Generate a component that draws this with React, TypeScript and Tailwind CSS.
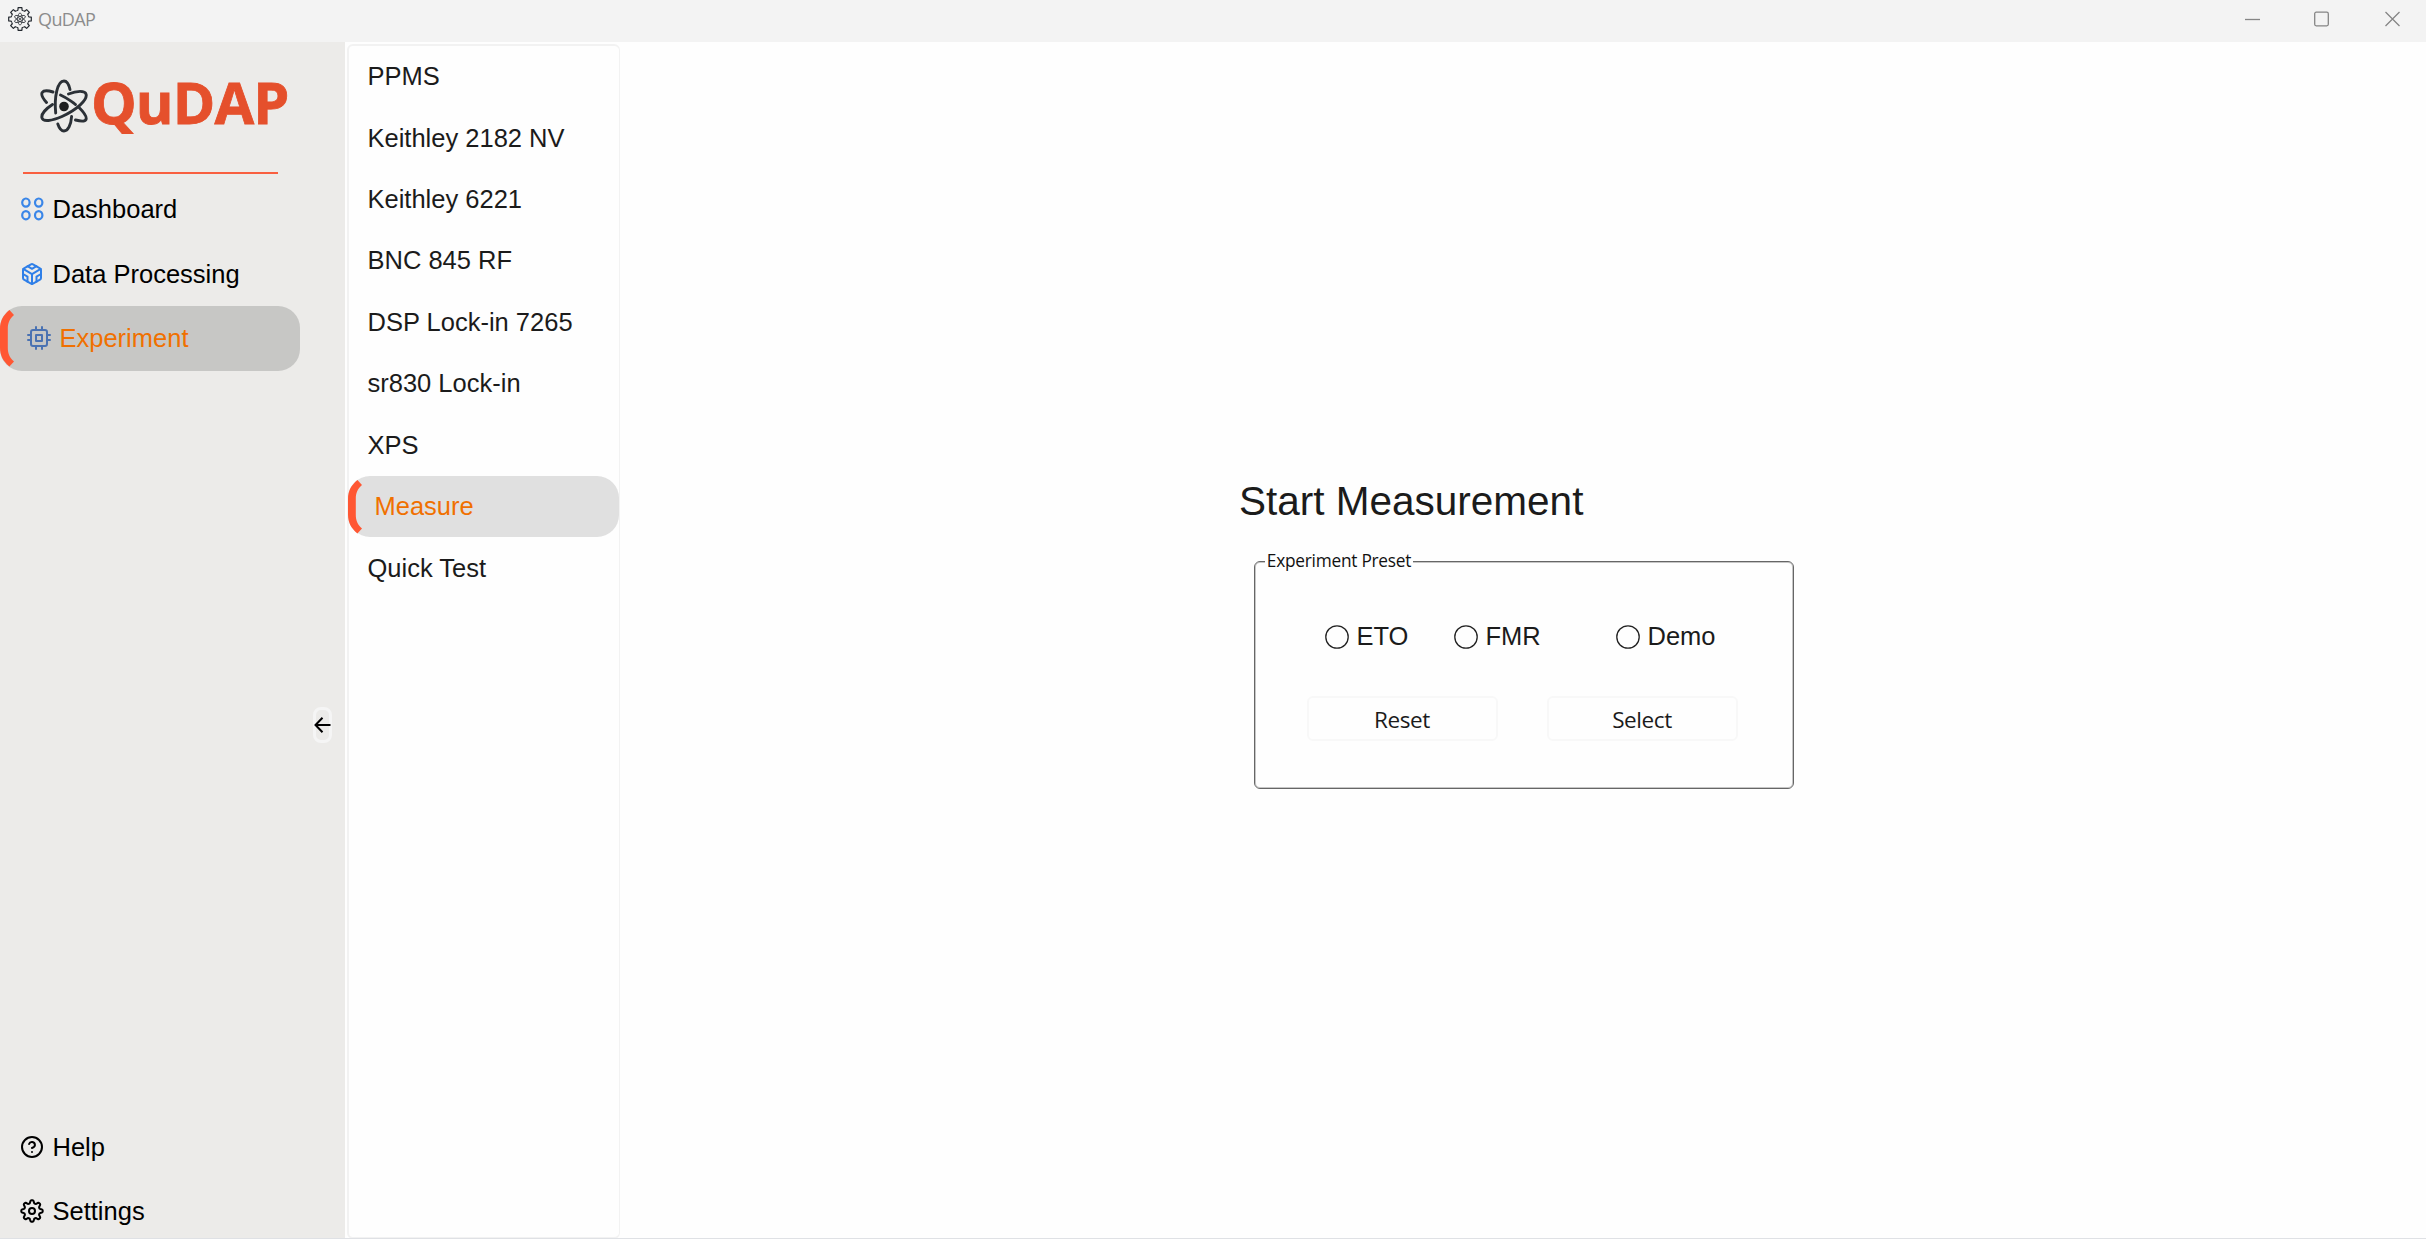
import type { ReactNode } from 'react'
import { FiCodesandbox, FiCpu, FiHelpCircle } from 'react-icons/fi'

const instruments = [
  'PPMS',
  'Keithley 2182 NV',
  'Keithley 6221',
  'BNC 845 RF',
  'DSP Lock-in 7265',
  'sr830 Lock-in',
  'XPS',
  'Measure',
  'Quick Test',
]

/** Curved accent on the left edge of a selected entry. */
function SelectionMark({ height }: { height: number }) {
  const b = height - 4
  const d = `M9.4 4C3 9.500 0 15 0 23V${height - 23}C0 ${height - 15} 3 ${b - 5.5} 9.4 ${b}L14 ${b - 5}C9.500 ${b - 9} 7.800 ${b - 13} 7.800 ${b - 19}V23C7.800 17 9.500 13 14 9Z`
  return (
    <svg className="absolute top-0 left-0" width="16" height={height} fill="#ff5733">
      <path d={d} />
    </svg>
  )
}

function AppIcon() {
  const teeth = [0, 45, 90, 135, 180, 225, 270, 315]
  return (
    <svg width="24" height="24" viewBox="0 0 24 24" fill="none" stroke="#23282f" strokeWidth="1.2">
      {teeth.map((a) => (
        <path
          key={a}
          transform={`rotate(${a} 12 12)`}
          d="M8.600 3.700L9.900 3.200L10.100 0.700H13.900L14.100 3.200L15.400 3.700"
          strokeLinejoin="round"
        />
      ))}
      <g strokeWidth="0.750">
        <ellipse cx="12" cy="12" rx="2.300" ry="6" />
        <ellipse cx="12" cy="12" rx="2.300" ry="6" transform="rotate(60 12 12)" />
        <ellipse cx="12" cy="12" rx="2.300" ry="6" transform="rotate(120 12 12)" />
      </g>
      <circle cx="12" cy="12" r="0.900" fill="#23282f" stroke="none" />
    </svg>
  )
}

function AtomLogo() {
  return (
    <svg width="48" height="54" viewBox="0 0 48 54" fill="none" stroke="#2b3036" strokeWidth="2.900" strokeLinecap="round">
      <path d="M15.700 34C14.200 19 17 2 24 2C27 2 29 6 30 10.500" />
      <path d="M17.800 45C19.300 49.500 21.300 52 24 52C28 52 31 46 31.600 37.500" />
      <path d="M28.500 15C37 11.500 45 11.500 46 15C48 21 36 31 22 37.500C12 42 3 43 2 39C1 35.500 5.500 30 12.500 25.500" />
      <path d="M20.500 16C28 19.500 35 25 35.500 25.500" />
      <path d="M39.500 29C44.500 34 47 38 46 40.500C45 42.500 41 42.500 35.500 41" />
      <path d="M6.500 23.500C2.500 19 1 15.500 2.200 13.500C3.500 11.500 8 11.500 13 13" />
      <circle cx="24" cy="27.500" r="4.800" fill="#1e1e1e" stroke="none" />
    </svg>
  )
}

function DashboardIcon() {
  return (
    <svg width="24" height="24" viewBox="0 0 24 24" fill="none" stroke="#3a86e8" strokeWidth="2.2">
      <ellipse cx="5.900" cy="5.600" rx="3.700" ry="4.100" />
      <ellipse cx="18.700" cy="5.600" rx="3.700" ry="4.100" />
      <ellipse cx="5.900" cy="18.200" rx="3.700" ry="4.100" />
      <ellipse cx="18.700" cy="18.200" rx="3.700" ry="4.100" />
    </svg>
  )
}

const gearOutline = Array.from({ length: 96 }, (_, i) => {
  const t = (i / 96) * 2 * Math.PI
  const wave = Math.cos(8 * t)
  const r = 9.3 + 1.5 * Math.tanh(1.8 * wave)
  return `${(12 + r * Math.sin(t)).toFixed(2)} ${(12 - r * Math.cos(t)).toFixed(2)}`
}).join('L')

function SettingsIcon() {
  return (
    <svg width="24" height="24" viewBox="0 0 24 24" fill="none" stroke="black" strokeWidth="2" strokeLinejoin="round">
      <path d={`M${gearOutline}Z`} />
      <circle cx="12" cy="12" r="3" />
    </svg>
  )
}

function NavItem({ icon, label, selected = false }: { icon: ReactNode; label: string; selected?: boolean }) {
  return (
    <div
      className={
        selected
          ? 'relative flex h-[64.5px] w-[300px] shrink-0 items-center rounded-[22px] bg-[#c7c7c5] pl-[27px] text-[#f07000]'
          : 'flex h-[64.5px] w-[300px] shrink-0 items-center pl-5 text-black'
      }
    >
      {selected && <SelectionMark height={64.5} />}
      <span className="flex w-[32.500px] shrink-0 items-center">{icon}</span>
      <span>{label}</span>
    </div>
  )
}

function Radio({ label, className }: { label: string; className: string }) {
  return (
    <div className={`flex items-center ${className}`}>
      <svg className="mr-2 shrink-0" width="24" height="24" viewBox="0 0 24 24" fill="none" stroke="#222222" strokeWidth="1.300">
        <circle cx="12" cy="12" r="11.200" />
      </svg>
      <span>{label}</span>
    </div>
  )
}

function PresetButton({ label }: { label: string }) {
  return (
    <button className="flex h-[45px] w-[191px] items-center justify-center rounded-md border-2 border-[#f8f8f8] pt-0.5 pr-px font-['Open_Sans',sans-serif] text-[22.500px] tracking-[-0.4px]">
      {label}
    </button>
  )
}

export default function App() {
  return (
    <div className="flex h-[1239px] w-[2426px] flex-col overflow-hidden bg-[#fefefe] font-['Liberation_Sans',Arial,sans-serif] text-[25.5px] text-[#1b1b1b]">
      <header className="flex h-[42px] shrink-0 items-center bg-[#f3f3f3] pr-[26px] pb-1 pl-2">
        <AppIcon />
        <span className="mt-px ml-1.5 font-['Open_Sans',sans-serif] text-[18px] tracking-[-0.600px] text-[#8c8c8c]">QuDAP</span>
        <svg className="ml-auto" width="155" height="16" viewBox="0 0 155 16" fill="none" stroke="#858585" strokeWidth="1.300">
          <path d="M0 8.500H15" />
          <rect x="69.700" y="1.200" width="13.600" height="13.600" rx="1.500" />
          <path d="M140.500 1L154.500 15M154.500 1L140.500 15" />
        </svg>
      </header>

      <div className="flex min-h-0 flex-1">
        <aside className="flex w-[345px] shrink-0 bg-[#ecebe9]">
          <div className="flex w-[300px] shrink-0 flex-col">
            <div className="flex h-[129.500px] shrink-0 items-start pt-[37px] pl-[40px]">
              <AtomLogo />
              <span className="mt-[-7px] ml-[3px] font-['Open_Sans',sans-serif] text-[57.500px] leading-[60px] font-bold tracking-[-0.900px] text-[#e5502c] [-webkit-text-stroke:0.8px_#e5502c]">
                QuDAP
              </span>
            </div>
            <div className="mb-[3.500px] ml-[23px] h-[2px] w-[255px] shrink-0 bg-[#f95f40]" />
            <NavItem icon={<DashboardIcon />} label="Dashboard" />
            <NavItem icon={<FiCodesandbox size={24} color="#2f7fe8" />} label="Data Processing" />
            <NavItem icon={<FiCpu size={24} color="#4a72b2" />} label="Experiment" selected />
            <div className="flex-1" />
            <NavItem icon={<FiHelpCircle size={24} />} label="Help" />
            <NavItem icon={<SettingsIcon />} label="Settings" />
            <div className="-mb-[5.500px] shrink-0" />
          </div>
          <button className="mt-[664.500px] ml-[13px] flex h-[36px] w-[19px] items-center justify-center rounded-[8px] border-[3px] border-[#f5f5f5]">
            <svg className="shrink-0" width="17" height="16" viewBox="0 0 17 16" fill="none" stroke="black" strokeWidth="2">
              <path d="M1.500 8H16.500M8.500 0.800L1.500 8L8.500 15.200" />
            </svg>
          </button>
        </aside>

        <nav className="mt-[2px] -mb-px ml-[2px] w-[273px] shrink-0 rounded-md border-2 border-r border-[#f2f2f2]">
          <div className="-mt-[0.5px] -ml-px flex flex-col">
            {instruments.map((name) =>
              name === 'Measure' ? (
                <div key={name} className="relative flex h-[61.5px] items-center rounded-[22px] bg-[#e0e0e0] pl-[26.500px] text-[#f07000]">
                  <SelectionMark height={61.5} />
                  {name}
                </div>
              ) : (
                <div key={name} className="flex h-[61.45px] items-center pl-[19.500px]">
                  {name}
                </div>
              ),
            )}
          </div>
        </nav>

        <main className="flex flex-1 flex-col pt-[429px] pl-[619px]">
          <h1 className="h-[90px] text-[40.500px] leading-[60px]">Start Measurement</h1>
          <fieldset className="ml-[15px] h-[228px] w-[540px] rounded-md border border-[#666666] text-[#1b1b1b] inset-shadow-[0_0_0_1px_#c6c6c6]">
            <div className="-mt-[13px] ml-[10px] flex h-[24px] w-[148px] items-center justify-center bg-[#fefefe] font-['Open_Sans',sans-serif] text-[17.300px] tracking-[-0.250px] whitespace-nowrap text-[#111111]">
              Experiment Preset
            </div>
            <div className="mt-[48px] ml-[69.500px] flex h-[31px] items-center">
              <Radio label="ETO" className="w-[129px]" />
              <Radio label="FMR" className="w-[162px]" />
              <Radio label="Demo" className="w-[120px]" />
            </div>
            <div className="mt-[44px] ml-[52px] flex gap-[49px]">
              <PresetButton label="Reset" />
              <PresetButton label="Select" />
            </div>
          </fieldset>
        </main>
      </div>
      <div className="h-px shrink-0 bg-[#dfe1e5]" />
    </div>
  )
}
